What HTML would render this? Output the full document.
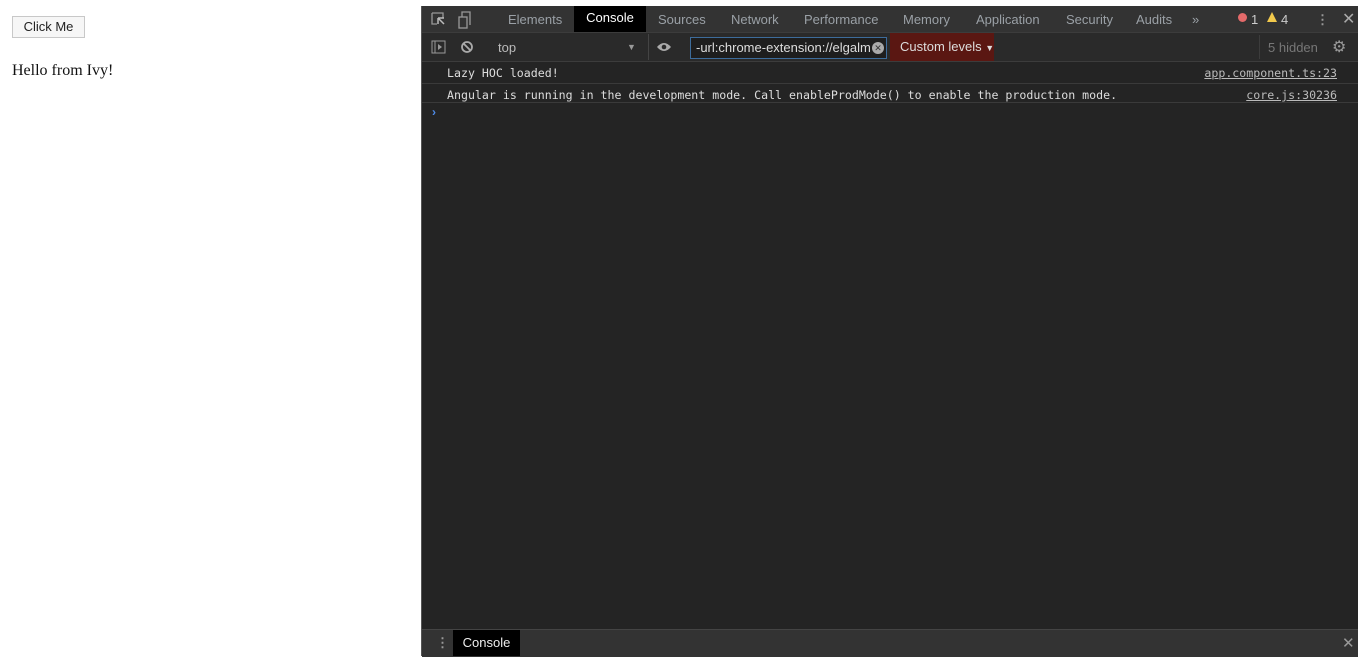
<!DOCTYPE html><html><head><style>
body{margin:0;width:1358px;height:656px;overflow:hidden;background:#fff;position:relative;font-family:"Liberation Sans",sans-serif}
.a{position:absolute;white-space:nowrap}
#dt{left:421px;top:6px;width:937px;height:650px;background:#242424;border-left:1px solid #555}
.tab{position:absolute;top:6px;font-size:13px;color:#9aa0a6}
.mono{font-family:"DejaVu Sans Mono","Liberation Mono",monospace;font-size:11.6px;color:#ddd}
</style></head><body>
<div class="a" style="left:12px;top:16px;width:71px;height:20px;border:1px solid #c8c8c8;background:#f6f6f6;font-size:13px;text-align:center;line-height:20px;color:#222">Click Me</div>
<div class="a" style="left:12px;top:62px;font-family:'Liberation Serif',serif;font-size:16px;color:#111">Hello from Ivy!</div>
<div id="dt" class="a">
 <div class="a" style="left:0;top:0;width:937px;height:26px;background:#333;border-bottom:1px solid #3c3c3c"></div>
 <svg class="a" style="left:9px;top:5px" width="40" height="18"><path d="M1 2h11v5M1 2v11h5" stroke="#999" fill="none" stroke-width="1.3"/><path d="M7 7l6 6M7 7v6M7 7h6" stroke="#bbb" stroke-width="1.5" fill="none"/><rect x="28" y="6" width="8" height="11" stroke="#999" fill="none" stroke-width="1.3"/><path d="M31 6V1h8v13" stroke="#999" fill="none" stroke-width="1.3"/></svg>
 <div class="tab" style="left:86px">Elements</div>
 <div class="a" style="left:152px;top:0;width:72px;height:26px;background:#000;color:#fff;font-size:13px;line-height:24px;text-align:center">Console</div>
 <div class="tab" style="left:236px">Sources</div>
 <div class="tab" style="left:309px">Network</div>
 <div class="tab" style="left:382px">Performance</div>
 <div class="tab" style="left:481px">Memory</div>
 <div class="tab" style="left:554px">Application</div>
 <div class="tab" style="left:644px">Security</div>
 <div class="tab" style="left:714px">Audits</div>
 <div class="tab" style="left:770px">»</div>
 <div class="a" style="left:816px;top:7px;width:9px;height:9px;border-radius:50%;background:#e46a6a"></div>
 <div class="tab" style="left:829px;color:#ccc">1</div>
 <div class="a" style="left:845px;top:6px;width:0;height:0;border-left:5px solid transparent;border-right:5px solid transparent;border-bottom:10px solid #f2c94c"></div>
 <div class="tab" style="left:859px;color:#ccc">4</div>
 <div class="tab" style="left:894px;color:#999;font-weight:bold">⋮</div>
 <div class="tab" style="left:920px;color:#aaa;font-size:16px;top:3px">✕</div>
 <div class="a" style="left:0;top:27px;width:937px;height:28px;background:#2a2a2a;border-bottom:1px solid #3c3c3c"></div>
 <svg class="a" style="left:9px;top:34px" width="50" height="16"><rect x="1" y="1" width="13" height="12" stroke="#999" fill="none"/><path d="M4 1v12" stroke="#999"/><path d="M7 4l4 3-4 3z" fill="#999"/><circle cx="36" cy="7" r="5" stroke="#aaa" fill="none" stroke-width="1.8"/><path d="M32.5 3.5l7 7" stroke="#aaa" stroke-width="1.8"/></svg>
 <div class="a" style="left:76px;top:34px;font-size:13px;color:#bbb">top</div>
 <div class="a" style="left:205px;top:36px;font-size:9px;color:#999">▼</div>
 <div class="a" style="left:226px;top:28px;width:1px;height:26px;background:#444"></div>
 <svg class="a" style="left:234px;top:35px" width="16" height="12"><path d="M1 6Q8-2 15 6Q8 14 1 6z" fill="#aaa"/><circle cx="8" cy="6" r="2.3" fill="#2a2a2a"/></svg>
 <div class="a" style="left:268px;top:31px;width:190px;height:20px;border:1px solid #3d6c9b;background:#1e1e1e;font-size:13px;color:#ddd;line-height:20px;padding-left:5px;overflow:hidden">-url:chrome-extension://elgalm</div>
 <div class="a" style="left:450px;top:36px;width:12px;height:12px;border-radius:50%;background:#aaa;color:#333;font-size:9px;text-align:center;line-height:12px">✕</div>
 <div class="a" style="left:468px;top:27px;width:104px;height:28px;background:#5a1712;color:#ddd;font-size:13px;line-height:28px;padding-left:10px;box-sizing:border-box">Custom levels <span style="font-size:9px">▼</span></div>
 <div class="a" style="left:837px;top:29px;width:1px;height:24px;background:#3c3c3c"></div>
 <div class="a" style="left:846px;top:34px;font-size:13px;color:#777">5 hidden</div>
 <div class="a" style="left:910px;top:31px;font-size:16px;color:#999">⚙</div>
 <div class="a" style="left:0;top:56px;width:937px;height:21px;border-bottom:1px solid #3a3a3a"></div>
 <div class="a mono" style="left:25px;top:60px">Lazy HOC loaded!</div>
 <div class="a mono" style="right:22px;top:60px;text-decoration:underline;color:#bbb">app.component.ts:23</div>
 <div class="a mono" style="left:25px;top:82px">Angular is running in the development mode. Call enableProdMode() to enable the production mode.</div>
 <div class="a mono" style="right:22px;top:82px;text-decoration:underline;color:#bbb">core.js:30236</div>
 <div class="a" style="left:0;top:78px;width:937px;height:18px;border-bottom:1px solid #3a3a3a"></div>
 <div class="a" style="left:10px;top:99px;font-size:12px;color:#4d8be8;font-weight:bold">›</div>
 <div class="a" style="left:0;top:623px;width:937px;height:27px;background:#333;border-top:1px solid #444"></div>
 <div class="a" style="left:14px;top:629px;font-size:13px;color:#999;font-weight:bold">⋮</div>
 <div class="a" style="left:31px;top:624px;width:67px;height:26px;background:#000;color:#eee;font-size:13px;line-height:26px;text-align:center">Console</div>
 <div class="a" style="left:920px;top:628px;font-size:15px;color:#999">✕</div>
</div>
</body></html>
